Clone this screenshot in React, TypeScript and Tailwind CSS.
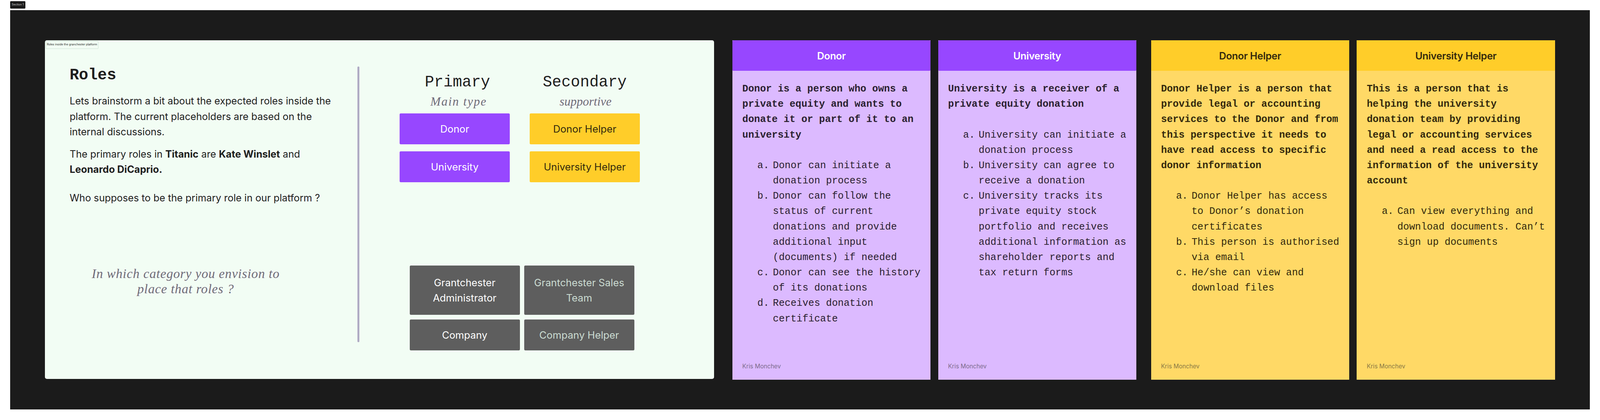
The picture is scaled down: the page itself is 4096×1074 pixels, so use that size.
const cards = [
  {
    title: "Donor",
    head: "bg-[#9747ff] text-white",
    body: "bg-[#dcbaff] text-[#2a2130]",
    foot: "text-[#7c6c8c]",
    lead: "Donor is a person who owns a private equity and wants to donate it or part of it to an university",
    items: [
      "Donor can initiate a donation process",
      "Donor can follow the status of current donations and provide additional input (documents) if needed",
      "Donor can see the history of its donations",
      "Receives donation certificate",
    ],
  },
  {
    title: "University",
    head: "bg-[#9747ff] text-white",
    body: "bg-[#dcbaff] text-[#2a2130]",
    foot: "text-[#7c6c8c]",
    lead: "University is a receiver of a private equity donation",
    items: [
      "University can initiate a donation process",
      "University can agree to receive a donation",
      "University tracks its private equity stock portfolio and receives additional information as shareholder reports and tax return forms",
    ],
  },
  {
    title: "Donor Helper",
    head: "bg-[#ffcd29] text-[#33290d]",
    body: "bg-[#ffd966] text-[#33290d]",
    foot: "text-[#8a7a45]",
    lead: "Donor Helper is a person that provide legal or accounting services to the Donor and from this perspective it needs to have read access to specific donor information",
    items: [
      "Donor Helper has access to Donor’s donation certificates",
      "This person is authorised via email",
      "He/she can view and download files",
    ],
  },
  {
    title: "University Helper",
    head: "bg-[#ffcd29] text-[#33290d]",
    body: "bg-[#ffd966] text-[#33290d]",
    foot: "text-[#8a7a45]",
    lead: "This is a person that is helping the university donation team by providing legal or accounting services and need a read access to the information of the university account",
    items: ["Can view everything and download documents. Can’t sign up documents"],
  },
];

const markers = ["a.", "b.", "c.", "d."];

function Card({ card, className }: { card: (typeof cards)[number]; className?: string }) {
  return (
    <section className={`w-[507.2px] h-[867.5px] flex flex-col ${card.body} ${className ?? ""}`}>
      <header className={`h-[78.3px] shrink-0 pt-[2px] rounded-t-[3px] rounded-b-[2px] flex items-center justify-center text-[25.4px] font-semibold tracking-[-0.3px] ${card.head}`}>
        {card.title}
      </header>
      <div className="flex-1 flex flex-col pt-[26.7px] pl-[25.5px] pb-[24px] font-['Liberation_Mono',monospace] text-[25.2px] leading-[39.17px]">
        <p className="w-[460px] font-bold">{card.lead}</p>
        <ol className="mt-[39.17px] ml-[38.5px]">
          {card.items.map((item, i) => (
            <li key={item} className="flex">
              <span className="w-[39.8px] shrink-0">{markers[i]}</span>
              <span className="w-[385px]">{item}</span>
            </li>
          ))}
        </ol>
        <p className={`mt-auto font-['Inter',sans-serif] text-[15.2px] leading-[20px] ${card.foot}`}>Kris Monchev</p>
      </div>
    </section>
  );
}

function Box({ children, className }: { children: React.ReactNode; className?: string }) {
  return (
    <div className={`w-[282px] rounded-[3px] flex items-center justify-center text-center text-[25.7px] leading-[39.17px] px-[20px] ${className ?? ""}`}>
      {children}
    </div>
  );
}

export default function App() {
  return (
    <div className="w-[4096px] h-[1074px] bg-white font-['Inter',sans-serif] text-[#1e1e1e] overflow-hidden pl-[26.1px] pt-[2.6px]">
      <div className="w-[38.5px] h-[19.6px] bg-[#1b1b1b] text-[#cfcfcf] rounded-[2px] flex items-center justify-center text-[7.2px]">
        Section 1
      </div>
      <main className="mt-[3.9px] w-[4043.6px] h-[1021px] bg-[#1b1b1b] pt-[77px] pl-[88.8px] flex items-start">
        <section className="relative w-[1713px] h-[866.3px] bg-[#f2fdf4] rounded-[5px] flex items-start pl-[63.3px]">
          <div className="absolute left-[2px] top-[2px] h-[19.6px] w-[135px] rounded-[2px] border border-[#cfe3d6] flex items-center justify-center whitespace-nowrap text-[7.3px]">
            Roles inside the granchester platform
          </div>
          <div className="w-[736.4px] shrink-0 pt-[65.5px]">
            <h1 className="font-['Liberation_Mono',monospace] font-bold text-[39.8px] leading-[48px]">Roles</h1>
            <div className="mt-[22.8px] w-[680px] text-[25.2px] leading-[39.17px]">
              <p>Lets brainstorm a bit about the expected roles inside the platform. The current placeholders are based on the internal discussions.</p>
              <p className="mt-[18.3px]">
                The primary roles in <b>Titanic</b> are <b>Kate Winslet</b> and <b>Leonardo DiCaprio.</b>
              </p>
              <p className="mt-[33.3px]">Who supposes to be the primary role in our platform ?</p>
            </div>
            <p className="mt-[153.9px] w-[594px] text-center font-['Liberation_Serif',serif] italic text-[#6f6a78] text-[33.5px] leading-[39.17px] tracking-[0.85px]">
              In which category you envision to<br />place that roles ?
            </p>
          </div>
          <div className="w-[5.4px] h-[705px] mt-[67.2px] shrink-0 rounded-full bg-[#b0abc4]" />
          <div className="ml-[103.1px] shrink-0 pt-[83.6px]">
            <div className="grid grid-cols-[282px_282px] gap-x-[50.9px]">
              <div className="text-center pl-[14px] font-['Liberation_Mono',monospace] text-[39.8px] leading-[48px]">Primary</div>
              <div className="text-center font-['Liberation_Mono',monospace] text-[39.8px] leading-[48px]">Secondary</div>
              <div className="mt-[8.9px] text-center pl-[20px] font-['Liberation_Serif',serif] italic text-[#6f6a78] text-[31.5px] leading-[32px] tracking-[2px]">Main type</div>
              <div className="mt-[8.9px] text-center pl-[4px] font-['Liberation_Serif',serif] italic text-[#6f6a78] text-[31.5px] leading-[32px]">supportive</div>
            </div>
            <div className="mt-[14.6px] grid grid-cols-[282px_282px] gap-x-[50.9px] gap-y-[18.3px] auto-rows-[79px]">
              <Box className="bg-[#9747ff] text-white">Donor</Box>
              <Box className="bg-[#ffcd29] text-[#33290d]">Donor Helper</Box>
              <Box className="bg-[#9747ff] text-white">University</Box>
              <Box className="bg-[#ffcd29] text-[#33290d]">University Helper</Box>
            </div>
            <div className="mt-[212.8px] ml-[25.5px] grid grid-cols-[282px_282px] grid-rows-[125.3px_79px] gap-x-[11.1px] gap-y-[12.4px]">
              <Box className="bg-[#5e5e5e] text-white">Grantchester Administrator</Box>
              <Box className="bg-[#5e5e5e] text-[#cbdcd2]">Grantchester Sales Team</Box>
              <Box className="bg-[#5e5e5e] text-white">Company</Box>
              <Box className="bg-[#5e5e5e] text-[#cbdcd2]">Company Helper</Box>
            </div>
          </div>
        </section>
        <Card card={cards[0]} className="ml-[46.9px]" />
        <Card card={cards[1]} className="ml-[19.6px]" />
        <Card card={cards[2]} className="ml-[37.9px]" />
        <Card card={cards[3]} className="ml-[19.6px]" />
      </main>
    </div>
  );
}
